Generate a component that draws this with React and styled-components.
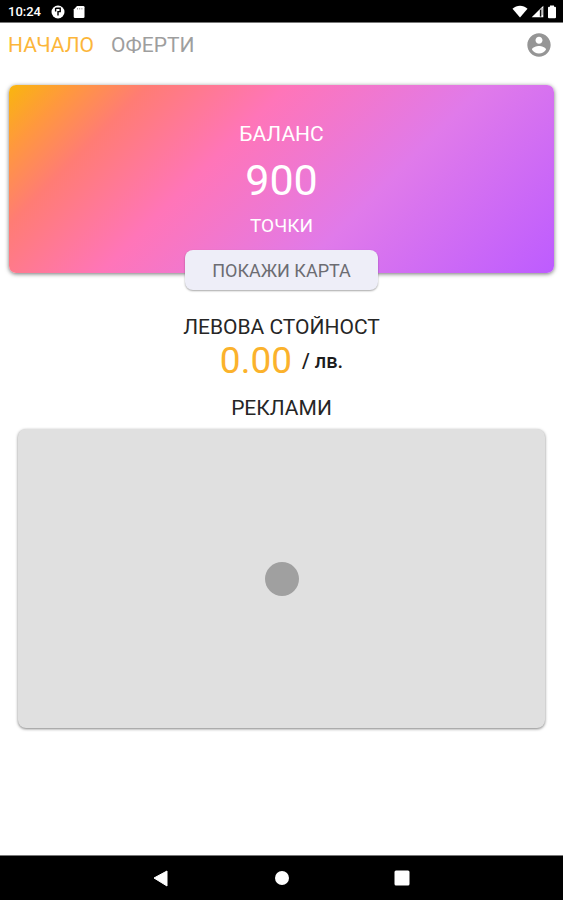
import React from "react";
import styled, { createGlobalStyle } from "styled-components";

const GlobalStyle = createGlobalStyle`
  *, *::before, *::after { box-sizing: border-box; }
  body { margin: 0; background: #fff; font-family: Roboto, "Noto Sans", sans-serif; }
  button { font: inherit; border: 0; padding: 0; background: none; cursor: pointer; }
  h1, h2, p { margin: 0; font-weight: 400; }
`;

const Screen = styled.div`
  min-height: 100vh;
  display: flex;
  flex-direction: column;
  color: #1c1c1c;
`;

const StatusBar = styled.div`
  display: flex;
  align-items: center;
  justify-content: space-between;
  height: 23px;
  padding: 1px 6px 0 8px;
  background: #000;
  border-bottom: 1px solid #777;
  color: #fff;
`;

const StatusGroup = styled.div`
  display: flex;
  align-items: center;
  gap: ${(p) => p.$gap};
`;

const Clock = styled.time`
  font-size: 13px;
  line-height: 16px;
  font-weight: 500;
  margin-right: 2px;
`;

const Header = styled.header`
  display: flex;
  align-items: center;
  justify-content: space-between;
  height: 44px;
  padding: 0 10px 0 8px;
`;

const Tabs = styled.nav`
  display: flex;
  gap: 17px;
`;

const Tab = styled.a`
  font-size: 21px;
  line-height: 24px;
  text-decoration: none;
  color: ${(p) => (p.$active ? "#fcb63a" : "#9e9e9e")};
`;

const ProfileButton = styled.button`
  display: flex;
  color: #959595;
`;

const Main = styled.main`
  flex: 1;
  display: flex;
  flex-direction: column;
  align-items: stretch;
  padding: 18px 9px 0;
`;

const BalanceCard = styled.section`
  display: flex;
  flex-direction: column;
  align-items: center;
  height: 188px;
  padding-top: 36px;
  border-radius: 7px;
  color: #fff;
  background: linear-gradient(
    135deg,
    #f9b60e 0%,
    #ff983e 9%,
    #ff7c74 19%,
    #ff75b8 38%,
    #e07aea 65%,
    #bd5cff 100%
  );
  box-shadow: 0 1px 4px rgba(0, 0, 0, 0.55);
`;

const CardLabel = styled.h1`
  font-size: 21px;
  line-height: 26px;
`;

const CardUnit = styled.p`
  font-size: 19px;
  line-height: 26px;
`;

const Points = styled.p`
  font-size: 43px;
  line-height: 52px;
  margin: 7px 0;
`;

const ShowCardButton = styled.button`
  align-self: center;
  height: 40px;
  margin-top: -23px;
  padding: 0 27px;
  border-radius: 8px;
  background: #eeeef8;
  color: #6c6c72;
  font-size: 18px;
  box-shadow: 0 1px 2px rgba(0, 0, 0, 0.35);
`;

const Section = styled.section`
  display: flex;
  flex-direction: column;
  align-items: center;
  margin-top: ${(p) => p.$top};
`;

const SectionTitle = styled.h2`
  font-size: 21px;
  line-height: 24px;
  color: #262626;
`;

const ValueLine = styled.p`
  display: flex;
  align-items: center;
  gap: 10px;
  height: 44px;
`;

const Amount = styled.span`
  font-size: 37px;
  line-height: 44px;
  color: #fbb22c;
`;

const Currency = styled.span`
  font-size: 20px;
  line-height: 24px;
  font-weight: 500;
`;

const AdPanel = styled.div`
  align-self: stretch;
  display: flex;
  align-items: center;
  justify-content: center;
  height: 299px;
  margin: 9px 9px 24px;
  border-radius: 8px;
  background: #e0e0e0;
  box-shadow: 0 1px 3px rgba(0, 0, 0, 0.5);
`;

const LoadingDot = styled.div`
  width: 34px;
  height: 34px;
  border-radius: 50%;
  background: #a0a0a0;
`;

const NavBar = styled.nav`
  display: flex;
  align-items: center;
  justify-content: center;
  gap: 96px;
  height: 45px;
  background: #000;
  border-top: 1px solid #777;
`;

const NavButton = styled.button`
  display: flex;
  color: #fff;
`;

const AppIcon = () => (
  <svg width="14" height="14" viewBox="0 0 14 14">
    <circle cx="7" cy="7" r="6.5" fill="#fff" />
    <path d="M4.600 3.300h4.600v3.300H7v4" fill="none" stroke="#000" strokeWidth="1.4" />
    <path d="M4.600 3v3.500" stroke="#000" strokeWidth="1.4" />
  </svg>
);

const SdIcon = () => (
  <svg width="12" height="14" viewBox="0 0 12 14">
    <path d="M4 1h6.2q1.3 0 1.3 1.3v9.4q0 1.3-1.3 1.3H2Q.7 13 .7 11.7V4.5z" fill="#fff" />
    <path d="M4.5 3v1.500M6.7 3v1.500M8.9 3v1.500" stroke="#888" strokeWidth="0.8" />
  </svg>
);

const WifiIcon = () => (
  <svg width="16" height="13" viewBox="0 0 16 13">
    <path d="M.5 3.8C4.8-.2 11.2-.2 15.5 3.8L8 12.6z" fill="#fff" />
  </svg>
);

const SignalIcon = () => (
  <svg width="13" height="13" viewBox="0 0 13 13">
    <path d="M12.3.7v11.6H.7z" fill="#fff" />
    <path d="M9.6 4.6v7" stroke="#111" strokeWidth="1.5" />
    <path d="M11 3v7" stroke="#888" strokeWidth="1" />
  </svg>
);

const BatteryIcon = () => (
  <svg width="10" height="14" viewBox="0 0 10 14">
    <path d="M3 .5h4v1.3h1q1 0 1 1v9.4q0 1-1 1H2q-1 0-1-1V2.800q0-1 1-1h1z" fill="#fff" />
  </svg>
);

const ProfileIcon = () => (
  <svg width="28" height="28" viewBox="0 0 24 24" fill="currentColor">
    <path d="M12 2C6.480 2 2 6.480 2 12s4.480 10 10 10 10-4.480 10-10S17.520 2 12 2zm0 3c1.660 0 3 1.340 3 3s-1.340 3-3 3-3-1.340-3-3 1.340-3 3-3zm0 14.200c-2.500 0-4.710-1.280-6-3.220.03-1.990 4-3.080 6-3.080 1.990 0 5.970 1.090 6 3.080-1.290 1.940-3.500 3.220-6 3.220z" />
  </svg>
);

export default function App() {
  return (
    <>
      <GlobalStyle />
      <Screen>
        <StatusBar>
          <StatusGroup $gap="8px">
            <Clock>10:24</Clock>
            <AppIcon />
            <SdIcon />
          </StatusGroup>
          <StatusGroup $gap="3px">
            <WifiIcon />
            <SignalIcon />
            <BatteryIcon />
          </StatusGroup>
        </StatusBar>
        <Header>
          <Tabs>
            <Tab href="#home" $active aria-current="page">НАЧАЛО</Tab>
            <Tab href="#offers">ОФЕРТИ</Tab>
          </Tabs>
          <ProfileButton aria-label="Профил">
            <ProfileIcon />
          </ProfileButton>
        </Header>
        <Main>
          <BalanceCard>
            <CardLabel>БАЛАНС</CardLabel>
            <Points>900</Points>
            <CardUnit>ТОЧКИ</CardUnit>
          </BalanceCard>
          <ShowCardButton>ПОКАЖИ КАРТА</ShowCardButton>
          <Section $top="25px">
            <SectionTitle>ЛЕВОВА СТОЙНОСТ</SectionTitle>
            <ValueLine>
              <Amount>0.00</Amount>
              <Currency>/ лв.</Currency>
            </ValueLine>
          </Section>
          <Section $top="13px">
            <SectionTitle>РЕКЛАМИ</SectionTitle>
            <AdPanel role="status" aria-label="Зареждане">
              <LoadingDot />
            </AdPanel>
          </Section>
        </Main>
        <NavBar>
          <NavButton aria-label="Назад">
            <svg width="24" height="24" viewBox="0 0 24 24">
              <path d="M4 12L17 5v15z" fill="currentColor" stroke="currentColor" strokeLinejoin="round" />
            </svg>
          </NavButton>
          <NavButton aria-label="Начален екран">
            <svg width="24" height="24" viewBox="0 0 24 24">
              <circle cx="12" cy="12" r="7" fill="currentColor" />
            </svg>
          </NavButton>
          <NavButton aria-label="Скорошни">
            <svg width="24" height="24" viewBox="0 0 24 24">
              <rect x="4.500" y="4.500" width="15" height="15" rx="1.500" fill="currentColor" />
            </svg>
          </NavButton>
        </NavBar>
      </Screen>
    </>
  );
}
